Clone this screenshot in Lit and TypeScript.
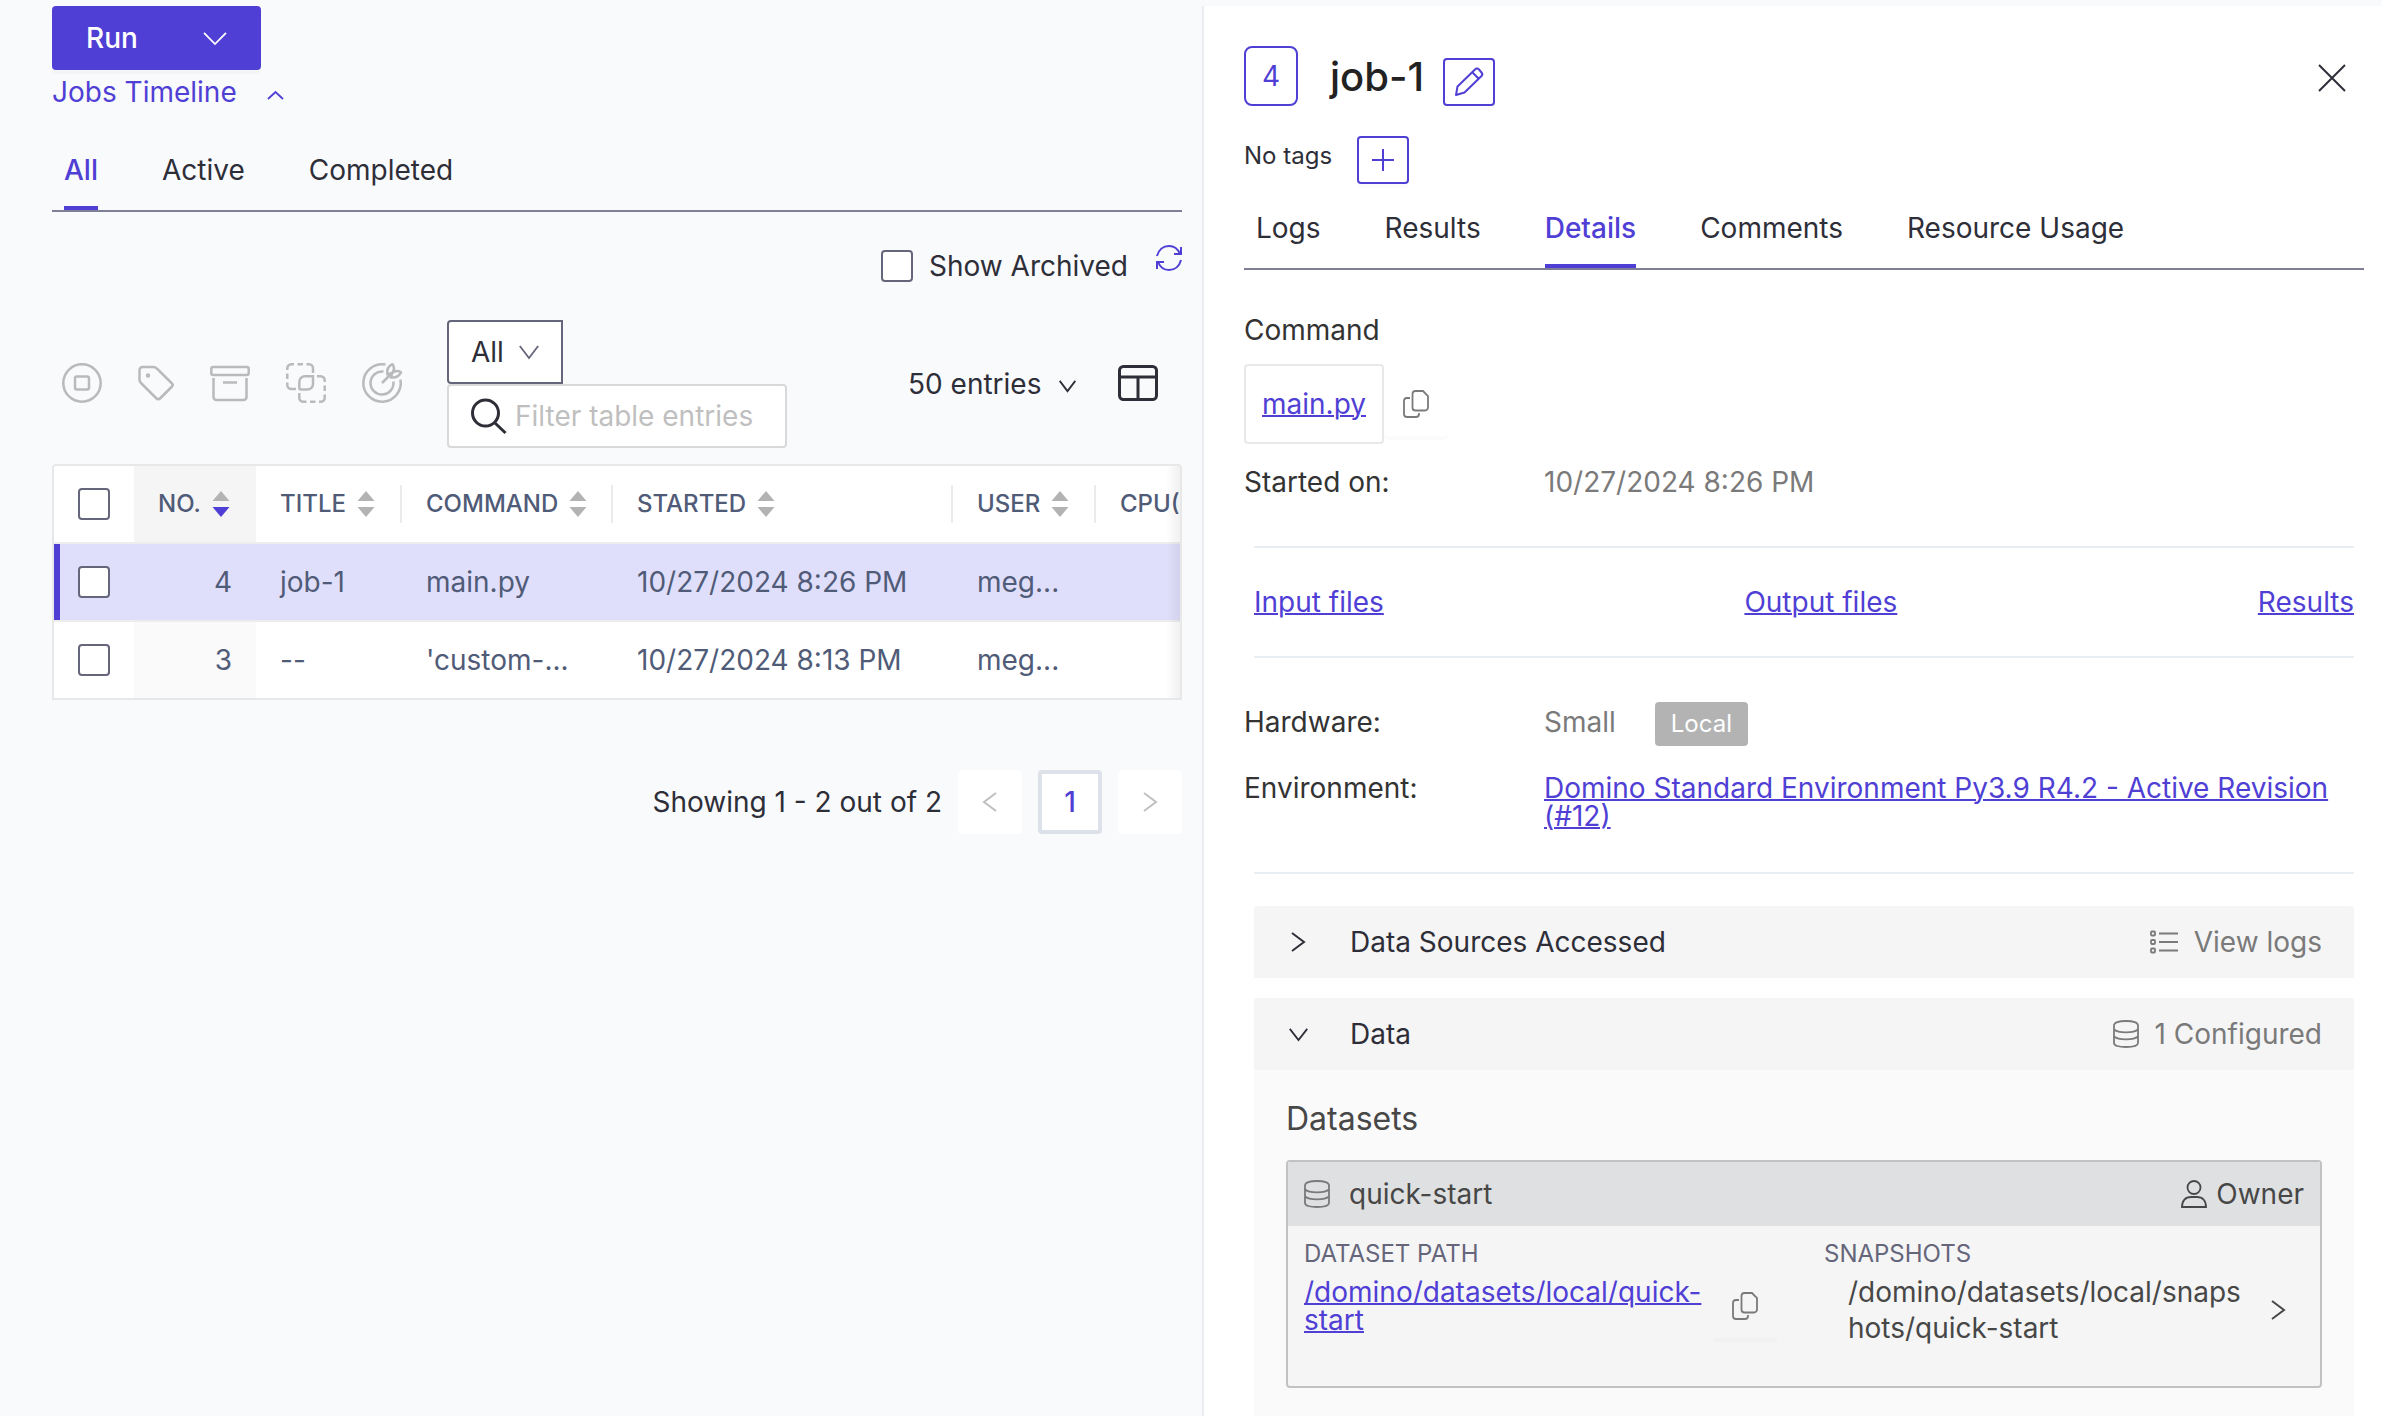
import { LitElement, html, css, svg } from "lit";
import { customElement, state } from "lit/decorators.js";
import { classMap } from "lit/directives/class-map.js";

const chevronDown = (w: number, h: number) => html`<svg class="icon fine" width=${w} height=${h} viewBox="0 0 24 14" preserveAspectRatio="none" aria-hidden="true">
  <path d="M1 1 12 13 23 1" vector-effect="non-scaling-stroke" /></svg>`;
const chevronUp = html`<svg class="icon fine" width="17" height="9" viewBox="0 0 17 9" aria-hidden="true"><path d="M1 8 8.5 1 16 8" /></svg>`;
const chevronRight = html`<svg class="icon" width="14" height="20" viewBox="0 0 14 20" aria-hidden="true"><path d="M1 1 13 10 1 19" /></svg>`;
const chevronLeft = html`<svg class="icon" width="14" height="20" viewBox="0 0 14 20" aria-hidden="true"><path d="M13 1 1 10 13 19" /></svg>`;

const copyIcon = html`<svg class="icon fine" width="26" height="28" viewBox="0 0 26 28" aria-hidden="true">
  <path d="M12.5 1H20L25 6V17.500a3 3 0 0 1-3 3H12.500a3 3 0 0 1-3-3V4a3 3 0 0 1 3-3Z" />
  <path d="M7 8H4a3 3 0 0 0-3 3V24a3 3 0 0 0 3 3H13a3 3 0 0 0 3-3V23" /></svg>`;
const databaseIcon = html`<svg class="icon fine" width="26" height="28" viewBox="0 0 26 28" aria-hidden="true">
  <path d="M1 5.500C1 2.500 5.500 1 13 1s12 1.500 12 4.500V23c0 2.700-4.500 4-12 4S1 25.700 1 23Z" />
  <path d="M1 9.500c2 2 6 2.800 12 2.800s10-.8 12-2.800M1 16.500c2 2 6 2.800 12 2.800s10-.8 12-2.800" /></svg>`;
const userIcon = html`<svg class="icon fine" width="26" height="28" viewBox="0 0 26 28" aria-hidden="true">
  <circle cx="13" cy="7.500" r="6.500" /><path d="M1 27c0-6.500 3.500-10 9-10h6c5.500 0 9 3.500 9 10Z" /></svg>`;
const listIcon = html`<svg class="icon fine" width="28" height="24" viewBox="0 0 28 24" aria-hidden="true">
  <rect x="1" y="1.500" width="4" height="4" rx="1" /><rect x="1" y="10" width="4" height="4" rx="1" /><rect x="1" y="18.500" width="4" height="4" rx="1" />
  <path d="M9 3.500H28M9 12H28M9 20.500H28" /></svg>`;
const refreshIcon = html`<svg class="icon" width="26" height="26" viewBox="0 0 26 26" aria-hidden="true">
  <path d="M1 11C2.500 5 7 1 13 1c5 0 9 3 11 8M25 2V9H18M25 15c-1.500 6-6 10-12 10-5 0-9-3-11-8M1 24V17H8" /></svg>`;
const pencilIcon = html`<svg class="icon" width="28" height="28" viewBox="0 0 28 28" aria-hidden="true">
  <path d="M24 1.500 26.500 4.500a2.500 2.500 0 0 1 0 3.500L9.500 24.500 1 27 2.500 18.500 20 1.500a2.500 2.500 0 0 1 4 0ZM17.500 4.500 23.500 10.500" stroke-linejoin="round" /></svg>`;
const plusIcon = html`<svg class="icon" width="24" height="24" viewBox="0 0 24 24" aria-hidden="true"><path d="M12 1V23M1 12H23" /></svg>`;
const closeIcon = html`<svg class="icon" width="28" height="28" viewBox="0 0 28 28" aria-hidden="true"><path d="M1 1 27 27M27 1 1 27" /></svg>`;
const searchIcon = html`<svg class="icon bold" width="36" height="36" viewBox="0 0 36 36" aria-hidden="true">
  <circle cx="14.500" cy="15" r="13" /><path d="M24 25 34.500 35" /></svg>`;
const layoutIcon = html`<svg class="icon bold" width="40" height="36" viewBox="0 0 40 36" aria-hidden="true">
  <rect x="1.500" y="1.500" width="37" height="33" rx="4" /><path d="M1.500 12H38.500M20 12V34" /></svg>`;

const sorter = (active: boolean) => html`<svg class="sorter" width="18" height="26" viewBox="0 0 18 26" aria-hidden="true">
  <path class="tri" d="M9 0 17.500 10H.5Z" /><path class=${active ? "tri on" : "tri"} d="M9 26 .5 16H17.500Z" /></svg>`;

const actions = [
  { name: "Stop", w: 40, art: svg`<circle cx="20" cy="20" r="18.700" /><rect x="13" y="13.500" width="14" height="13" rx="2" />` },
  { name: "Tag", w: 36, art: svg`<path d="M1.500 7a3 3 0 0 1 3-3H15c2 0 3 .6 4 1.600L34 20.500c1 1 1 2 0 3L22.500 35c-1.500 1.500-3 1.500-4.500 0L3 20c-1-1-1.500-2-1.500-3.500Z" /><circle cx="10" cy="12.500" r="1" />` },
  { name: "Archive", w: 40, art: svg`<rect x="1.300" y="4" width="37.400" height="8" rx="2" /><path d="M3.500 15V34a3 3 0 0 0 3 3H33.500a3 3 0 0 0 3-3V15M13 19.500H27" />` },
  { name: "Group", w: 40, art: svg`<path d="M1.300 7V5.300a4 4 0 0 1 4-4H8M11.500 1.300H17M20.500 1.300h2.500a4 4 0 0 1 4 4V10M1.300 10.500V16M1.300 19.500V22a4 4 0 0 0 4 4H10" />
    <path d="M27 13.300V21a5.500 5.500 0 0 1-5.500 5.500H15a1.700 1.700 0 0 1-1.700-1.700V19A5.500 5.500 0 0 1 19 13.300ZM31 13.300h3.700a4 4 0 0 1 4 4V19M38.700 22.500V28M38.700 31.500v3.200a4 4 0 0 1-4 4H33M29.500 38.700H24M20.500 38.700H17.300a4 4 0 0 1-4-4V30" />` },
  { name: "Set goal", w: 40, art: svg`<path d="M23.500 1.600a18.700 18.700 0 1 0 14.900 14.900M21.500 8.600a11.500 11.500 0 1 0 9.900 9.900M20 20 30 10" />
    <path d="M30 10 25.500 11.500C24.500 6.500 26.500 3 30.500 1.200 32.500 4 32.500 7 30 10c3-2.500 6-2.500 9-.7C37.500 13 34.500 15 29 14.500Z" stroke-linejoin="round" />` },
];

const columns = ["No.", "Title", "Command", "Started", "User"];
const jobs = [
  { no: 4, title: "job-1", command: "main.py", started: "10/27/2024 8:26 PM", user: "meg..." },
  { no: 3, title: "--", command: "'custom-...", started: "10/27/2024 8:13 PM", user: "meg..." },
];

@customElement("app-root")
export class AppRoot extends LitElement {
  @state() private listTab = "All";
  @state() private detailTab = "Details";

  static styles = css`
    :host {
      --brand: #503fd5;
      --ink: #2e2e38;
      --muted: #65657b;
      display: block;
      background: #f9fafc;
      color: var(--ink);
      font: 400 28px/44px Inter, "Liberation Sans", sans-serif;
    }
    * { box-sizing: border-box; }
    h1, h2, p, dl, dd, dt { margin: 0; font-weight: 400; }
    button, input, select { font: inherit; color: inherit; margin: 0; }
    button { display: flex; align-items: center; justify-content: center; padding: 0; border: 0; background: none; cursor: pointer; }
    a { color: var(--brand); text-decoration: underline; text-decoration-thickness: 2px; }
    .icon { display: block; flex: none; fill: none; stroke: currentColor; stroke-width: 2; overflow: visible; }
    .bold { stroke-width: 3; }
    .fine { stroke-width: 1.800; }

    .page { display: grid; grid-template-columns: minmax(0, 1202fr) minmax(0, 1180fr); min-height: 100vh; padding-top: 6px; }
    .jobs { padding: 0 20px 0 52px; }

    .run { width: 209px; height: 64px; padding: 0 34px; justify-content: space-between; border-radius: 4px; background: var(--brand); color: #fff; font-weight: 500; box-shadow: 0 4px 0 rgba(0, 0, 0, 0.02); }
    .timeline { gap: 30px; height: 44px; color: var(--brand); }
    .timeline .icon { margin-top: 6px; }

    .tabs { display: flex; gap: 64px; padding-left: 12px; border-bottom: 2px solid #7f8098; }
    .jobs .tabs { margin-top: 16px; }
    .tab { height: 80px; white-space: nowrap; border: solid transparent; border-width: 4px 0; }
    .tab.on { color: var(--brand); font-weight: 500; border-bottom-color: var(--brand); }

    .check { appearance: none; display: block; flex: none; width: 32px; height: 32px; border: 2px solid var(--muted); border-radius: 4px; background: #fff; }
    .archived { display: flex; justify-content: flex-end; gap: 28px; margin-top: 32px; }
    .archived label { display: flex; align-items: center; gap: 16px; }
    .refresh { height: 28px; color: var(--brand); }

    .toolbar { display: flex; align-items: center; justify-content: space-between; margin-top: 32px; }
    .group { display: flex; align-items: center; }
    .actions { display: flex; gap: 36px; padding: 0 45px 2px 10px; color: #bababc; }
    .actions .icon { stroke-width: 2.500; }
    .pick { display: grid; align-items: center; }
    .pick select { grid-area: 1 / 1; appearance: none; border: 0; background: none; padding: 0; outline: 0; }
    .pick .icon { grid-area: 1 / 1; justify-self: end; pointer-events: none; }
    .scope { width: 116px; height: 64px; padding-right: 22px; border: 2px solid var(--muted); border-radius: 4px 0 0 4px; background: #fff; }
    .scope select { padding-left: 22px; width: 100%; }
    .scope .icon { color: var(--muted); }
    .search { display: flex; align-items: center; gap: 8px; width: 340px; height: 64px; padding: 0 22px; border: 2px solid #d9d9d9; border-radius: 4px; background: #fff; }
    .search input { flex: 1; min-width: 0; padding: 0; border: 0; outline: 0; background: none; }
    .search input::placeholder { color: #bfbfbf; opacity: 1; }
    .sizes { display: flex; align-items: center; gap: 42px; padding-right: 24px; }
    .sizes button { padding-bottom: 2px; }
    .size { width: 168px; }
    .size .icon { margin-top: 4px; }

    .grid { position: relative; margin-top: 16px; border: 2px solid #e8e8e8; border-radius: 4px 4px 0 0; background: #fff; overflow: hidden; }
    .grid::after { content: ""; position: absolute; inset: 0 0 0 auto; width: 14px; background: linear-gradient(to right, transparent, rgba(0, 0, 0, 0.06)); }
    table { width: 1386px; table-layout: fixed; border-collapse: separate; border-spacing: 0; color: #505b78; }
    th, td { height: 78px; padding: 0 24px; text-align: left; font-weight: 400; white-space: nowrap; border-bottom: 2px solid #ededef; }
    tr:last-child td { height: 76px; border-bottom: 0; }
    th { font-size: 24px; line-height: 36px; font-weight: 500; text-transform: uppercase; background: linear-gradient(#ebebeb, #ebebeb) right center / 2px 38px no-repeat; }
    th.plain { background: none; }
    th.no { background: #f5f5f5; }
    td.no { background: #fafafa; text-align: right; }
    th button { gap: 11px; text-transform: uppercase; }
    .tri { fill: #b3b3b3; }
    .tri.on { fill: var(--brand); }
    tr.selected td { background: #e0dffb; }
    tr.selected td:first-child { box-shadow: inset 6px 0 var(--brand); }
    .c-check { width: 80px; } .c-no { width: 122px; } .c-title { width: 146px; } .c-command { width: 211px; }
    .c-started { width: 340px; } .c-user { width: 143px; }

    .pager { display: flex; align-items: center; justify-content: flex-end; gap: 16px; margin-top: 70px; }
    .pager button { width: 64px; height: 64px; border-radius: 4px; background: #fff; color: #bfbfbf; }
    .pager .current { border: 4px solid #dce1ea; color: var(--brand); font-weight: 500; }

    .panel { display: flex; flex-direction: column; padding: 40px 18px 0 40px; border-left: 2px solid #ebecf0; background: #fff; }
    .head { display: flex; height: 64px; align-items: flex-start; }
    .num { width: 54px; height: 60px; display: flex; align-items: center; justify-content: center; border: 2px solid var(--brand); border-radius: 8px; color: var(--brand); }
    h1 { margin: 0 19px 0 32px; font-size: 40px; line-height: 62px; font-weight: 500; color: #222; }
    .square { width: 52px; height: 48px; border: 2px solid var(--brand); border-radius: 4px; color: var(--brand); box-shadow: 0 4px 0 rgba(0, 0, 0, 0.016); }
    .head .square { margin-top: 12px; }
    .close { width: 64px; height: 64px; margin-left: auto; }
    .tags { display: flex; align-items: flex-start; gap: 25px; margin: 26px 0 4px; font-size: 24px; line-height: 40px; }
    .label { color: #333; }
    .command { margin-top: 38px; }
    .file { display: flex; align-items: center; margin: 12px 0 16px; }
    .file a { padding: 16px; border: 2px solid #e8e8e8; border-radius: 4px; }
    .copy { flex: none; width: 64px; height: 64px; border-radius: 4px; color: #7a7a7a; box-shadow: 0 4px 0 rgba(0, 0, 0, 0.016); }
    .facts { display: grid; grid-template-columns: 300px minmax(0, 1fr); align-items: baseline; }
    dt { color: #333; }
    dd { color: #7a7a7a; }
    .tight { margin-top: 28px; line-height: 28px; }
    .local { display: inline-block; margin-left: 39px; padding: 0 16px; border-radius: 4px; background: #b3b3b3; color: #fff; font-size: 24px; }
    .hardware { height: 46px; }
    .rule { height: 2px; margin: 42px 10px; border: 0; background: #e9edf4; flex: none; }
    .rule.flush { margin-bottom: 0; }
    .rule.both { margin-top: 0; }
    .rule.last { margin-bottom: 32px; }
    .links { display: flex; justify-content: space-between; align-items: center; height: 108px; padding: 0 10px; }
    .section { margin: 0 10px 20px; }
    .section.open { flex: 1; margin-bottom: 0; background: #fafafa; }
    .bar { display: flex; align-items: center; justify-content: space-between; height: 72px; padding: 0 32px; border-radius: 4px 4px 0 0; background: #f5f5f5; }
    .toggle { gap: 40px; }
    .mark { display: flex; width: 24px; justify-content: center; }
    .aside { display: flex; align-items: center; gap: 16px; color: #7a7a7a; }
    .content { padding: 28px 32px; color: #474747; }
    h2 { font-size: 32px; line-height: 42px; }
    .card { margin-top: 20px; border: 2px solid #c2c2c2; border-radius: 4px; background: #f5f5f5; }
    .card-head { display: flex; align-items: center; height: 64px; padding: 0 16px; background: #dfe0e2; }
    .card-head .name { margin-left: 19px; flex: 1; }
    .owner { display: flex; align-items: center; gap: 9px; }
    .card-head > .icon { color: #7a7a7a; }
    .paths { display: grid; grid-template-columns: 52% 48%; padding: 10px 16px 40px; }
    .caption { margin-bottom: 2px; font-size: 24px; line-height: 36px; color: var(--muted); }
    .path { display: flex; justify-content: space-between; }
    .path.source { padding-right: 47px; line-height: 28px; }
    .path.source p { padding-top: 4px; }
    .path.target { padding-left: 24px; gap: 4px; line-height: 36px; word-break: break-all; }
    .next { flex: none; width: 52px; height: 72px; }
  `;

  private tabs(names: string[], active: string, pick: (n: string) => void) {
    return html`<div class="tabs" role="tablist">
      ${names.map((n) => html`<button role="tab" aria-selected=${n === active} class=${classMap({ tab: true, on: n === active })} @click=${() => pick(n)}>${n}</button>`)}
    </div>`;
  }

  private renderJobs() {
    return html`<main class="jobs">
      <button class="run">Run ${chevronDown(24, 13)}</button>
      <button class="timeline">Jobs Timeline ${chevronUp}</button>
      ${this.tabs(["All", "Active", "Completed"], this.listTab, (n) => (this.listTab = n))}
      <div class="archived">
        <label><input class="check" type="checkbox" />Show Archived</label>
        <button class="refresh" aria-label="Refresh">${refreshIcon}</button>
      </div>
      <div class="toolbar">
        <div class="group">
          <div class="actions">
            ${actions.map((a) => html`<button aria-label=${a.name}><svg class="icon" width=${a.w} height="40" viewBox="0 0 ${a.w} 40" aria-hidden="true">${a.art}</svg></button>`)}
          </div>
          <div>
            <div class="pick scope"><select aria-label="Filter column"><option>All</option></select>${chevronDown(20, 14)}</div>
            <label class="search">${searchIcon}<input type="text" aria-label="Filter table entries" placeholder="Filter table entries" /></label>
          </div>
        </div>
        <div class="sizes">
          <div class="pick size"><select aria-label="Page size"><option>50 entries</option></select>${chevronDown(17, 12)}</div>
          <button aria-label="Columns">${layoutIcon}</button>
        </div>
      </div>
      <div class="grid">
        <table>
          <colgroup><col class="c-check" /><col class="c-no" /><col class="c-title" /><col class="c-command" /><col class="c-started" /><col class="c-user" /><col /></colgroup>
          <thead><tr>
            <th class="plain"><input class="check" type="checkbox" aria-label="Select all" /></th>
            ${columns.map((c, i) => html`<th class=${i ? "" : "no"}><button>${c}${sorter(i === 0)}</button></th>`)}
            <th class="plain">CPU(</th>
          </tr></thead>
          <tbody>
            ${jobs.map((j, i) => html`<tr class=${i ? "" : "selected"}>
              <td><input class="check" type="checkbox" aria-label="Select job ${j.no}" /></td>
              <td class="no">${j.no}</td><td>${j.title}</td><td>${j.command}</td><td>${j.started}</td><td>${j.user}</td><td></td>
            </tr>`)}
          </tbody>
        </table>
      </div>
      <div class="pager">
        <span>Showing 1 - 2 out of 2</span>
        <button aria-label="Previous page">${chevronLeft}</button>
        <button class="current">1</button>
        <button aria-label="Next page">${chevronRight}</button>
      </div>
    </main>`;
  }

  private renderDetails() {
    return html`<aside class="panel">
      <div class="head">
        <span class="num">4</span>
        <h1>job-1</h1>
        <button class="square" aria-label="Edit title">${pencilIcon}</button>
        <button class="close" aria-label="Close">${closeIcon}</button>
      </div>
      <div class="tags"><span>No tags</span><button class="square" aria-label="Add tag">${plusIcon}</button></div>
      ${this.tabs(["Logs", "Results", "Details", "Comments", "Resource Usage"], this.detailTab, (n) => (this.detailTab = n))}
      <p class="label command">Command</p>
      <div class="file"><a href="#main">main.py</a><button class="copy" aria-label="Copy command">${copyIcon}</button></div>
      <dl class="facts"><dt>Started on:</dt><dd>10/27/2024 8:26 PM</dd></dl>
      <hr class="rule flush" />
      <nav class="links"><a href="#input">Input files</a><a href="#output">Output files</a><a href="#results">Results</a></nav>
      <hr class="rule both" />
      <dl class="facts hardware"><dt>Hardware:</dt><dd>Small<span class="local">Local</span></dd></dl>
      <dl class="facts tight"><dt>Environment:</dt><dd><a href="#environment">Domino Standard Environment Py3.9 R4.2 - Active Revision (#12)</a></dd></dl>
      <hr class="rule last" />
      <section class="section">
        <div class="bar">
          <button class="toggle" aria-expanded="false"><span class="mark">${chevronRight}</span>Data Sources Accessed</button>
          <button class="aside">${listIcon}View logs</button>
        </div>
      </section>
      <section class="section open">
        <div class="bar">
          <button class="toggle" aria-expanded="true"><span class="mark">${chevronDown(19, 13)}</span>Data</button>
          <span class="aside">${databaseIcon}1 Configured</span>
        </div>
        <div class="content">
          <h2>Datasets</h2>
          <div class="card">
            <div class="card-head">${databaseIcon}<span class="name">quick-start</span><span class="owner">${userIcon}Owner</span></div>
            <div class="paths">
              <div>
                <p class="caption">DATASET PATH</p>
                <div class="path source"><p><a href="#dataset">/domino/datasets/local/quick-start</a></p><button class="copy" aria-label="Copy path">${copyIcon}</button></div>
              </div>
              <div>
                <p class="caption">SNAPSHOTS</p>
                <div class="path target"><p>/domino/datasets/local/snapshots/quick-start</p><button class="next" aria-label="Open snapshots">${chevronRight}</button></div>
              </div>
            </div>
          </div>
        </div>
      </section>
    </aside>`;
  }

  render() {
    return html`<div class="page">${this.renderJobs()}${this.renderDetails()}</div>`;
  }
}
